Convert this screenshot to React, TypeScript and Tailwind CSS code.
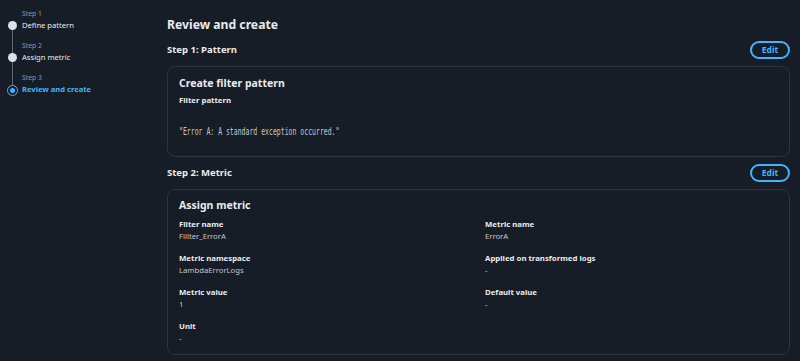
import React from "react";

const font = { fontFamily: '"Noto Sans", "Open Sans", sans-serif' };

function Step({ n, name, state, first, last }: { n: number; name: string; state: "done" | "active"; first?: boolean; last?: boolean }) {
  return (
    <div className="flex">
      <div className="flex w-[24px] flex-col items-center">
        <div className={`h-[21px] w-px ${first ? "" : "bg-[#5f6b7a]"}`} />
        {state === "active" ? (
          <div className="flex h-[11px] w-[11px] items-center justify-center rounded-full border-[1.5px] border-[#42b4ff]">
            <div className="h-[5px] w-[5px] rounded-full bg-[#42b4ff]" />
          </div>
        ) : (
          <div className="h-[9px] w-[9px] rounded-full bg-[#dedee3]" />
        )}
        <div className={`w-[1px] flex-1 ${last ? "" : "bg-[#5f6b7a]"}`} />
      </div>
      <div className="-ml-[2px] flex flex-col pt-[9px]">
        <div className="text-[6.8px] leading-[10px] text-[#8d99a8]">Step {n}</div>
        <div className={`text-[7.6px] leading-[13px] ${state === "active" ? "text-[7.4px] font-bold text-[#42b4ff]" : "text-[#e9ebed]"}`}>{name}</div>
      </div>
    </div>
  );
}

function EditBtn() {
  return (
    <button className="flex h-[18px] w-[40px] items-center justify-center rounded-full border-2 border-[#42b4ff] text-[8.5px] font-bold text-[#42b4ff]">
      Edit
    </button>
  );
}

function Field({ label, value }: { label: string; value: string }) {
  return (
    <div className="flex flex-col">
      <div className="text-[7.8px] font-bold leading-[11px] text-[#e9ebed]">{label}</div>
      <div className="text-[7.7px] leading-[12px] text-[#c6c6cd]">{value}</div>
    </div>
  );
}

export default function App() {
  return (
    <div className="flex h-[361px] w-[800px] overflow-hidden bg-[#161d26]" style={font}>
      <div className="flex w-[167px] shrink-0 flex-col">
        <Step n={1} name="Define pattern" state="done" first />
        <Step n={2} name="Assign metric" state="done" />
        <Step n={3} name="Review and create" state="active" last />
      </div>
      <div className="flex flex-1 flex-col pr-[10px] pt-[15px]">
        <h1 className="text-[12.2px] font-bold leading-[20px] text-[#e9ebed]">Review and create</h1>
        <div className="mt-[6px] flex items-center justify-between">
          <h2 className="text-[9.5px] font-bold text-[#e9ebed]">Step 1: Pattern</h2>
          <EditBtn />
        </div>
        <div className="mt-[7px] flex h-[91px] flex-col rounded-[8px] border border-[#2c3440] px-[11px] pt-[7px]">
          <div className="text-[10.5px] font-bold leading-[18px] text-[#e9ebed]">Create filter pattern</div>
          <div className="mt-[3px] text-[7.8px] font-bold leading-[11px] text-[#e9ebed]">Filter pattern</div>
          <div
            className="mt-[20px] origin-left scale-x-[0.65] whitespace-nowrap text-[10px] leading-[12px] text-[#c6c6cd]"
            style={{ fontFamily: '"DejaVu Sans Mono", monospace' }}
          >
            "Error A: A standard exception occurred."
          </div>
        </div>
        <div className="mt-[7px] flex items-center justify-between">
          <h2 className="text-[9.5px] font-bold text-[#e9ebed]">Step 2: Metric</h2>
          <EditBtn />
        </div>
        <div className="mt-[7px] flex h-[166px] flex-col rounded-[8px] border border-[#2c3440] px-[11px] pt-[6px]">
          <div className="text-[10.5px] font-bold leading-[18px] text-[#e9ebed]">Assign metric</div>
          <div className="mt-[5px] grid grid-cols-[306px_1fr] gap-y-[11px]">
            <Field label="Filter name" value="Fillter_ErrorA" />
            <Field label="Metric name" value="ErrorA" />
            <Field label="Metric namespace" value="LambdaErrorLogs" />
            <Field label="Applied on transformed logs" value="-" />
            <Field label="Metric value" value="1" />
            <Field label="Default value" value="-" />
            <Field label="Unit" value="-" />
          </div>
        </div>
      </div>
    </div>
  );
}
